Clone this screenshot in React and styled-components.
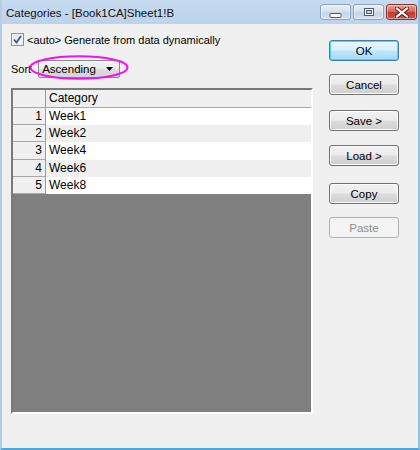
import React from "react";
import styled, { createGlobalStyle } from "styled-components";

const GlobalStyle = createGlobalStyle`
  html, body { margin: 0; padding: 0; background: #f0f0f0; }
  body { font-family: "Liberation Sans", Arial, sans-serif; }
  * { box-sizing: border-box; }
`;

const Window = styled.div`
  width: 420px;
  height: 450px;
  display: flex;
  flex-direction: column;
  background: #f0f0f0;
  border-left: 2px solid #b4cde6;
  border-right: 2px solid #8cc4ea;
  border-bottom: 2px solid #4aa8e0;
`;

const TitleBar = styled.div`
  height: 24px;
  flex: none;
  display: flex;
  align-items: flex-start;
  justify-content: space-between;
  background: linear-gradient(#c7dbf0, #bcd3eb);
  padding: 0 1px 0 4px;
`;

const TitleText = styled.div`
  font-size: 11.5px;
  color: #111;
  line-height: 24px;
  padding-top: 1px;
`;

const CaptionButtons = styled.div`
  display: flex;
  gap: 2px;
  margin-top: 4px;
`;

const CaptionButton = styled.div`
  width: 31px;
  height: 16px;
  border-radius: 3px;
  border: 1px solid ${(p) => (p.$close ? "#8a3027" : "#8fa3bd")};
  background: ${(p) =>
    p.$close
      ? "linear-gradient(#e7a295 0%, #d46b5b 45%, #c0392b 55%, #cf5a45 100%)"
      : "linear-gradient(#e9eff7 0%, #d7e2ef 45%, #c7d6e8 55%, #d3e0ee 100%)"};
  box-shadow: inset 0 0 0 1px rgba(255, 255, 255, 0.45);
  display: flex;
  align-items: center;
  justify-content: center;
`;

const Body = styled.div`
  flex: 1;
  display: flex;
  padding: 9px 0 0 9px;
`;

const LeftCol = styled.div`
  width: 302px;
  display: flex;
  flex-direction: column;
  position: relative;
`;

const CheckRow = styled.label`
  display: flex;
  align-items: center;
  gap: 3px;
  height: 13px;
  font-size: 11px;
  color: #000;
`;

const CheckBox = styled.span`
  width: 13px;
  height: 13px;
  border: 1px solid #8f8f8f;
  background: linear-gradient(135deg, #dfe3ea, #f6f7f9);
  box-shadow: inset 0 0 0 1px #f4f4f4;
  display: flex;
  align-items: center;
  justify-content: center;
`;

const SortRow = styled.div`
  display: flex;
  align-items: center;
  gap: 7px;
  margin-top: 14px;
  height: 18px;
  font-size: 11px;
`;

const Combo = styled.div`
  width: 82px;
  height: 18px;
  border: 1px solid #8a8a8a;
  border-radius: 2px;
  background: linear-gradient(#f3f3f3 0%, #ebebeb 48%, #dddddd 52%, #d3d3d3 100%);
  display: flex;
  align-items: center;
  justify-content: space-between;
  padding: 0 6px 0 3px;
  font-size: 11.5px;
  color: #000;
`;

const Highlight = styled.svg`
  position: absolute;
  left: 19px;
  top: 23px;
  overflow: visible;
`;

const Grid = styled.div`
  margin-top: 10px;
  width: 302px;
  height: 326px;
  border-style: solid;
  border-width: 2px;
  border-color: #7a7a7a #ffffff #ffffff #7a7a7a;
  background: #808080;
  display: flex;
  flex-direction: column;
`;

const Row = styled.div`
  display: flex;
  height: ${(p) => (p.$header ? 18 : 17.2)}px;
  font-size: 12px;
  color: #000;
`;

const RowHead = styled.div`
  width: 33px;
  flex: none;
  background: #f0f0f0;
  border-right: 1px solid #9a9a9a;
  border-bottom: 1px solid #a8a8a8;
  text-align: right;
  padding-right: 3px;
  line-height: 16px;
`;

const Cell = styled.div`
  flex: 1;
  padding-left: 3px;
  line-height: 17px;
  background: ${(p) => (p.$header ? "#f0f0f0" : p.$alt ? "#efefef" : "#ffffff")};
  border-bottom: ${(p) => (p.$header ? "1px solid #a8a8a8" : "none")};
`;

const RightCol = styled.div`
  display: flex;
  flex-direction: column;
  margin-left: 16px;
  padding-top: 7px;
`;

const Button = styled.button`
  width: 70px;
  height: 21px;
  margin-top: ${(p) => p.$gap}px;
  padding: 0;
  font-family: "Liberation Sans", Arial, sans-serif;
  font-size: 11.5px;
  color: ${(p) => (p.disabled ? "#8d8d8d" : "#000")};
  border-radius: 3px;
  border: 1px solid
    ${(p) => (p.$default ? "#3c7fb1" : p.disabled ? "#adb2b5" : "#707070")};
  background: ${(p) =>
    p.disabled
      ? "#f4f4f4"
      : p.$default
      ? "linear-gradient(#eaf6fd 0%, #d9f0fc 48%, #bee6fd 52%, #a7d9f5 100%)"
      : "linear-gradient(#f2f2f2 0%, #ebebeb 48%, #dddddd 52%, #cfcfcf 100%)"};
  box-shadow: ${(p) =>
    p.$default
      ? "inset 0 0 0 1px #48d5fb"
      : p.disabled
      ? "none"
      : "inset 0 0 0 1px #fcfcfc"};
`;

const rows = ["Week1", "Week2", "Week4", "Week6", "Week8"];

export default function App() {
  return (
    <>
      <GlobalStyle />
      <Window>
        <TitleBar>
          <TitleText>Categories - [Book1CA]Sheet1!B</TitleText>
          <CaptionButtons>
            <CaptionButton>
              <svg width="13" height="14" viewBox="0 0 13 14">
                <rect x="1" y="8.5" width="11" height="4" rx="0.5" fill="#fff" stroke="#4a5a70" />
              </svg>
            </CaptionButton>
            <CaptionButton>
              <svg width="12" height="10" viewBox="0 0 12 10">
                <rect x="1.5" y="1.5" width="9" height="7" fill="#fff" stroke="#4a5a70" />
                <rect x="3.5" y="3.5" width="5" height="3" fill="#c9d6e6" stroke="#4a5a70" />
              </svg>
            </CaptionButton>
            <CaptionButton $close>
              <svg width="14" height="11" viewBox="0 0 14 11">
                <path d="M2 1.5 L12 9.5 M12 1.5 L2 9.5" stroke="#5a1a14" strokeWidth="4" strokeLinecap="square" />
                <path d="M2 1.5 L12 9.5 M12 1.5 L2 9.5" stroke="#fff" strokeWidth="2.2" strokeLinecap="square" />
              </svg>
            </CaptionButton>
          </CaptionButtons>
        </TitleBar>
        <Body>
          <LeftCol>
            <CheckRow>
              <CheckBox>
                <svg width="9" height="9" viewBox="0 0 9 9">
                  <path d="M1 4.5 L3.5 7.5 L8 1" fill="none" stroke="#3d5a98" strokeWidth="1.8" />
                </svg>
              </CheckBox>
              &lt;auto&gt; Generate from data dynamically
            </CheckRow>
            <SortRow>
              <span>Sort</span>
              <Combo>
                <span>Ascending</span>
                <svg width="7" height="4" viewBox="0 0 7 4">
                  <path d="M0 0 H7 L3.5 4 Z" fill="#000" />
                </svg>
              </Combo>
            </SortRow>
            <Highlight width="98" height="23" viewBox="0 0 98 23">
              <ellipse cx="49" cy="11.5" rx="48.5" ry="11.2" fill="none" stroke="#f40ff4" strokeWidth="2" />
            </Highlight>
            <Grid>
              <Row $header>
                <RowHead />
                <Cell $header>Category</Cell>
              </Row>
              {rows.map((r, i) => (
                <Row key={r}>
                  <RowHead>{i + 1}</RowHead>
                  <Cell $alt={i % 2 === 1}>{r}</Cell>
                </Row>
              ))}
            </Grid>
          </LeftCol>
          <RightCol>
            <Button $default $gap={0}>OK</Button>
            <Button $gap={13}>Cancel</Button>
            <Button $gap={15}>Save &gt;</Button>
            <Button $gap={14}>Load &gt;</Button>
            <Button $gap={17}>Copy</Button>
            <Button $gap={13} disabled>Paste</Button>
          </RightCol>
        </Body>
      </Window>
    </>
  );
}
